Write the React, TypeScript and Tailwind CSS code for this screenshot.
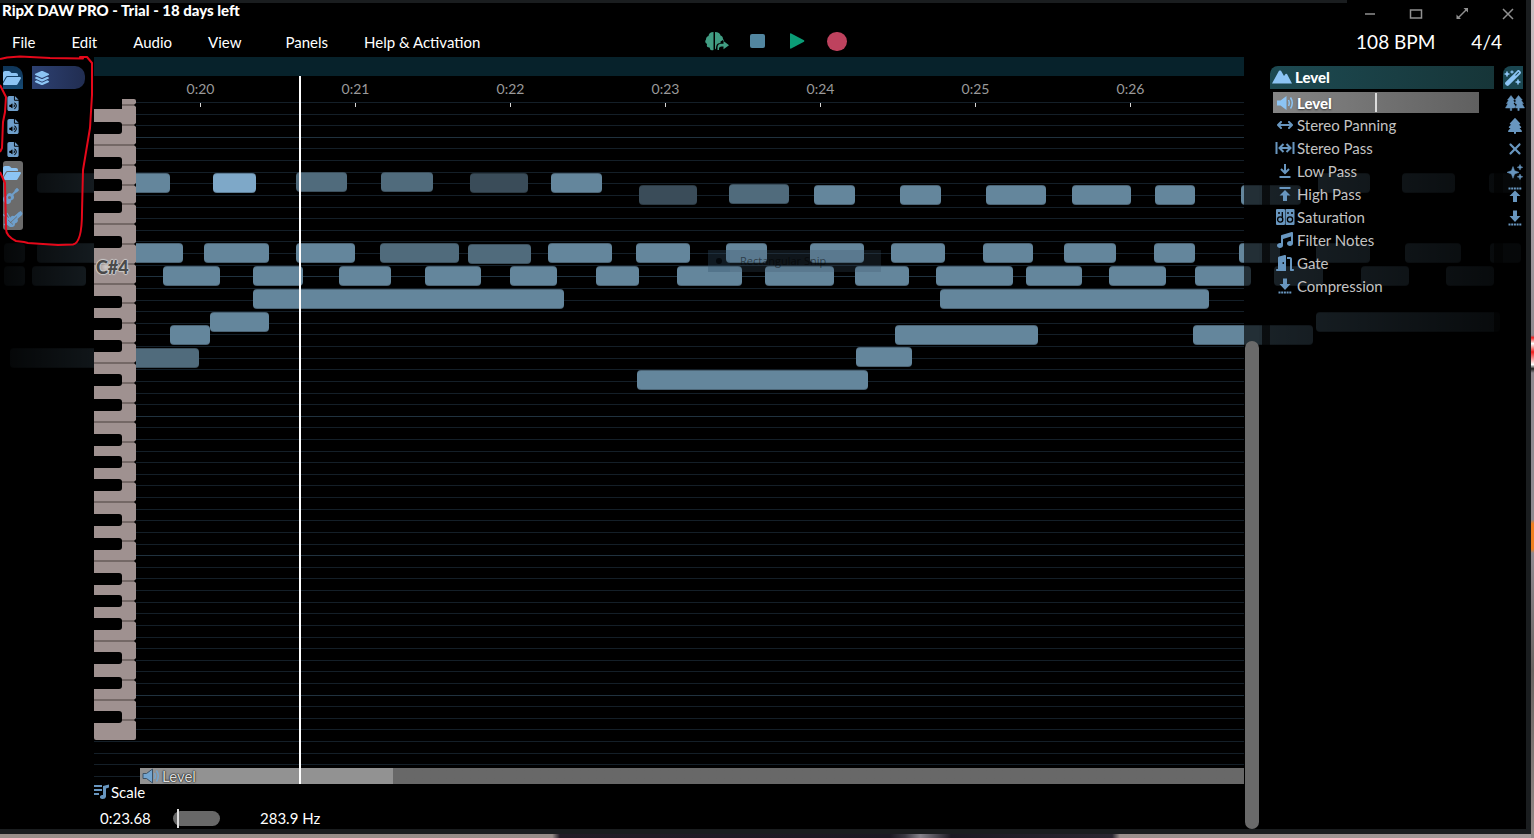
import type { ReactNode, SVGProps } from "react";
import {
  FaArrowsLeftRight,
  FaDoorOpen,
  FaFileAudio,
  FaFolderOpen,
  FaGuitar,
  FaLayerGroup,
  FaMusic,
  FaTree,
  FaWandMagicSparkles,
  FaXmark,
} from "react-icons/fa6";

type Tone = "base" | "bright" | "mid" | "dim";
type Note = [start: number, end: number, tone?: Tone];

const TONES: Record<Tone, string> = {
  base: "bg-[#64869c]",
  bright: "bg-[#7ea8c8]",
  mid: "bg-[#506b7c]",
  dim: "bg-[#3a4c59]",
};

// Each row is one pitch; notes are start / end offsets along the time axis
const NOTE_ROWS: { top: number; notes: Note[] }[] = [
  { top: 115, notes: [[296, 347, "mid"], [381, 433, "mid"]] },
  {
    top: 116,
    notes: [[37, 170], [213, 256, "bright"], [470, 528, "dim"], [551, 602], [1318, 1370], [1402, 1455], [1489, 1521]],
  },
  { top: 127, notes: [[729, 789, "mid"]] },
  {
    top: 128,
    notes: [[639, 697, "dim"], [814, 855], [900, 941], [986, 1046], [1072, 1131], [1155, 1195], [1241, 1301]],
  },
  {
    top: 186,
    notes: [
      [4, 25], [37, 183], [204, 269], [296, 355], [380, 459, "mid"], [548, 612], [636, 690], [726, 767], [810, 864],
      [891, 945], [983, 1033], [1064, 1116], [1154, 1195], [1239, 1280], [1316, 1370], [1405, 1461], [1490, 1521],
    ],
  },
  { top: 187, notes: [[468, 531, "mid"]] },
  {
    top: 209,
    notes: [
      [4, 25], [32, 86], [163, 220], [253, 303], [339, 391], [425, 481], [510, 557], [596, 639], [677, 742],
      [765, 834], [855, 909], [936, 1013], [1026, 1082], [1109, 1166], [1195, 1251], [1274, 1323], [1361, 1409],
      [1446, 1494],
    ],
  },
  { top: 232, notes: [[253, 564], [940, 1209]] },
  { top: 255, notes: [[210, 269], [1316, 1500]] },
  { top: 268, notes: [[170, 210], [895, 1038], [1193, 1313]] },
  { top: 290, notes: [[856, 912]] },
  { top: 291, notes: [[10, 199, "mid"]] },
  { top: 313, notes: [[637, 868]] },
];

const BLACK_KEYS = [
  23, 58, 80, 102, 137, 197, 219, 241, 275, 300, 335, 357, 380, 415, 439, 474, 496, 519, 553, 578, 612,
];
const KEY_EDGES = [
  6, 26, 46, 66, 86, 105, 125, 145, 165, 185, 204, 224, 244, 264, 284, 304, 323, 343, 363, 383, 403, 423, 442, 462,
  482, 502, 522, 542, 561, 581, 601, 621,
];

const TIMES = ["0:20", "0:21", "0:22", "0:23", "0:24", "0:25", "0:26"];

function Icon({ children, ...props }: SVGProps<SVGSVGElement>) {
  return (
    <svg viewBox="0 0 16 16" fill="currentColor" className="h-4 w-4" aria-hidden="true" {...props}>
      {children}
    </svg>
  );
}

const Mountains = () => (
  <Icon viewBox="0 0 20 14" className="h-[14px] w-5">
    <path d="M0 13.5 7 .8Q8 0 9 .8l3 5.2 1.5-2Q14 3.400 15 4l5 9.500Z" />
  </Icon>
);

const Volume = ({ outline }: { outline?: string }) => (
  <Icon viewBox="0 0 18 16" className="h-4 w-[18px]">
    <path d="M1 5.500h3.500L10.500 1v14L4.500 10.500H1z" stroke={outline} />
    <path d="M12.500 5q1.500 3 0 6M14.500 2.500q3.500 5.500 0 11" fill="none" stroke="currentColor" strokeWidth="1.500" />
  </Icon>
);

const StereoPassIcon = () => (
  <Icon viewBox="0 0 20 14" className="h-[14px] w-5">
    <path d="M1.500 1v12M18.500 1v12M4.500 7h11M8.500 3 4.500 7l4 4M11.500 3l4 4-4 4" fill="none" stroke="currentColor" strokeWidth="2" />
  </Icon>
);

const LowPassIcon = () => (
  <Icon>
    <path d="M8 1v9M4 6l4 4 4-4M2.500 14h11" fill="none" stroke="currentColor" strokeWidth="2" />
  </Icon>
);

const HighPassIcon = () => (
  <Icon>
    <path d="M2.500 1h11v2h-11zM8 4l5.500 5.500H10V15H6V9.500H2.500z" />
  </Icon>
);

const UpToDots = () => (
  <Icon>
    <path d="M8 3.500 13.500 9H10v6H6V9H2.500z" />
    <path d="M1.500 1.500h13" stroke="currentColor" strokeWidth="2" strokeDasharray="2 .7" />
  </Icon>
);

const DownToDots = () => (
  <Icon>
    <path d="M6 .5h4V6h3.500L8 12 2.500 6H6z" />
    <path d="M1.500 14.500h13" stroke="currentColor" strokeWidth="2" strokeDasharray="2 .7" />
  </Icon>
);

const Speakers = () => (
  <Icon viewBox="0 0 20 16" className="h-4 w-5">
    <rect x="1" y="0" width="9" height="16" rx="1" />
    <rect x="10.500" y="0" width="9" height="16" rx="1" />
    <g fill="none" stroke="#000" strokeWidth="1.300">
      <circle cx="5.200" cy="10.500" r="2.600" />
      <circle cx="15" cy="10.500" r="2.600" />
      <path d="M7.300 3v5M3 4h2M13 3v2M16 4h2" />
    </g>
  </Icon>
);

const TwoTrees = () => (
  <Icon viewBox="0 0 20 16" className="h-4 w-5">
    <path d="M6 .5 2.500 5h1.300L1.500 8.500H3L.5 13h4.800v2.500h1.400V13h2.800l1.200-1.500L8.500 8.500l1-1L8 5h1.500zM13.500.5 10 5l1.200.5L10 8l2 1.500L10.500 13h2.300v2.500h1.400V13h5.300L17 8.500h1.500L16 5h1.300z" stroke="currentColor" strokeWidth=".5" />
  </Icon>
);

const Sparkles = () => (
  <Icon>
    <path d="m6 2.500 1.600 4.200L12 8.300 7.600 10 6 14.300 4.400 10 0 8.300l4.400-1.600zM13 .5l.8 2 2 .8-2 .8-.8 2-.8-2-2-.8 2-.8zM13 10l.8 2 2 .8-2 .8-.8 2-.8-2-2-.8 2-.8z" stroke="currentColor" strokeWidth=".5" />
  </Icon>
);

const Violin = () => (
  <Icon viewBox="0 0 20 16" className="h-4 w-5">
    <path d="M2 8.500Q4 6 6.500 7.500L8 5.500q2-1.500 3.500 0L16 1l2-.5L19.500 2 19 4l-4.500 4q1 2-.5 3.500l-2 1q0 3-2.500 3.500-3 .5-4.500-1.500Q1.500 12.500 2 8.500Z" />
    <path d="M1 14 18 .5M0 3.500 10 11M4 2l5 9" stroke="currentColor" strokeWidth="1.200" />
    <path d="m5 9 5 4.500M7 12l7-6.500" stroke="#6b6b6b" strokeWidth=".8" />
  </Icon>
);

const ScaleIcon = () => (
  <Icon>
    <path d="M0 1h8v2H0zM0 5h8v2H0zM0 9h5v2H0zM9 2l6-1.500V3.500l-3 1v8Q11.500 15 8.500 15q-3-.5-2.500-2.500.5-2 3-1.500z" />
  </Icon>
);

const BrainExport = () => (
  <Icon viewBox="0 0 26 20" className="h-5 w-[26px]">
    <path d="M9.500 1v18Q6 20 5.500 16.500 2 16.500 3 13 0 11 2 8.500 2 5.500 4.500 5 5 1 9.500 1ZM11 1q5 0 5.500 3.500 2.500.5 2.500 3.500l1 1.500-1 .5v-1l-2.500 1.500v1.700H15q-3 .5-3 5.300l-1 1z" />
    <path d="M13.500 19v-3q.3-3.300 4-3.300h2V10l5.500 4.300-5.500 4V15.500h-2Q15 15.500 15 17.500V19z" />
  </Icon>
);

const EFFECTS: { name: string; icon: ReactNode }[] = [
  { name: "Stereo Panning", icon: <FaArrowsLeftRight className="h-4 w-4" /> },
  { name: "Stereo Pass", icon: <StereoPassIcon /> },
  { name: "Low Pass", icon: <LowPassIcon /> },
  { name: "High Pass", icon: <HighPassIcon /> },
  { name: "Saturation", icon: <Speakers /> },
  { name: "Filter Notes", icon: <FaMusic className="h-4 w-4" /> },
  { name: "Gate", icon: <FaDoorOpen className="h-[18px] w-[18px]" /> },
  { name: "Compression", icon: <DownToDots /> },
];

const TOOLS: { name: string; icon: ReactNode }[] = [
  { name: "Forest", icon: <TwoTrees /> },
  { name: "Tree", icon: <FaTree className="h-4 w-4" /> },
  { name: "Remove", icon: <FaXmark className="h-[18px] w-[18px]" /> },
  { name: "Enhance", icon: <Sparkles /> },
  { name: "Raise", icon: <UpToDots /> },
  { name: "Lower", icon: <DownToDots /> },
];

function Header() {
  return (
    <header className="h-[54px] shrink-0">
      <div className="flex h-5 items-start justify-between">
        <h1 className="pl-[2px] text-[15px] leading-[14px] font-black">RipX DAW PRO - Trial - 18 days left</h1>
        <div className="flex gap-[26px] pt-[1px] pr-2 text-[#909090]">
          <button aria-label="Minimise">
            <Icon className="h-5 w-5" viewBox="0 0 20 20">
              <path d="M5 10h10" stroke="currentColor" strokeWidth="1.500" />
            </Icon>
          </button>
          <button aria-label="Maximise">
            <Icon className="h-5 w-5" viewBox="0 0 20 20">
              <path d="M4.500 6h11v8h-11z" fill="none" stroke="currentColor" strokeWidth="1.500" />
            </Icon>
          </button>
          <button aria-label="Full screen">
            <Icon className="h-5 w-5" viewBox="0 0 20 20">
              <path d="m6 14 9-9" stroke="currentColor" strokeWidth="1.500" />
              <path d="M11.500 4H16v4.500zM4.500 10.500V15H9z" />
            </Icon>
          </button>
          <button aria-label="Close">
            <Icon className="h-5 w-5" viewBox="0 0 20 20">
              <path d="m5 5 10 10M15 5 5 15" stroke="currentColor" strokeWidth="1.500" />
            </Icon>
          </button>
        </div>
      </div>
      <div className="grid h-[34px] grid-cols-[1fr_auto_1fr] items-center pt-1">
        <nav className="flex gap-9 pl-3 text-[15px] leading-5">
          <button>File</button>
          <button>Edit</button>
          <button>Audio</button>
          <button className="mr-2">View</button>
          <button>Panels</button>
          <button>Help &amp; Activation</button>
        </nav>
        <div className="flex pb-[2px] pl-7 *:flex *:w-10 *:items-center *:justify-center">
          <button aria-label="Rip" className="text-[#419d83]">
            <BrainExport />
          </button>
          <button aria-label="Stop">
            <span className="h-[14px] w-[15px] rounded-[2px] bg-[#5286a0]" />
          </button>
          <button aria-label="Play" className="text-[#0b9c76]">
            <Icon>
              <path d="M1 1q0-1 1.200-.6L15 7.300q.8.700 0 1.400L2.200 15.600Q1 16 1 15z" />
            </Icon>
          </button>
          <button aria-label="Record">
            <span className="h-[19px] w-5 rounded-full bg-[#be425e]" />
          </button>
        </div>
        <div className="flex justify-end gap-9 pr-6 text-[19px] leading-6">
          <span>108 BPM</span>
          <span>4/4</span>
        </div>
      </div>
    </header>
  );
}

function Keyboard() {
  return (
    <div className="relative w-[42px] shrink-0 pt-[23px]">
      <svg viewBox="0 0 42 641" className="block h-[641px] w-[42px]" aria-label="Piano keys">
        <rect width="42" height="641" rx="2" fill="#9f9190" />
        {KEY_EDGES.map((y) => (
          <g key={y}>
            <path d={`M0 ${y}h42`} stroke="#746866" strokeWidth="2" />
            <path d={`M40 ${y}l2-2v4z`} />
          </g>
        ))}
        <path d="M0 0h28v10H0z" />
        {BLACK_KEYS.map((y) => (
          <rect key={y} x="-3" y={y} width="31" height="12" rx="3" />
        ))}
      </svg>
      <span className="absolute top-[179px] left-[2px] bg-[radial-gradient(circle_at_30%_50%,#d0cccb_0,#d0cccb00_30%)] text-[18px] leading-6 font-black text-[#4a4a4a] [text-shadow:1px_0_1px_#ccc,-1px_0_1px_#ccc,0_1px_1px_#ccc,0_-1px_1px_#ccc]">
        C#4
      </span>
    </div>
  );
}

// Pitch grid and notes run under every panel of the workspace
function NoteCanvas() {
  return (
    <div className="absolute inset-0 overflow-hidden">
      <div className="absolute top-0 right-[282px] bottom-[45px] left-[94px]">
        <svg width="100%" height="100%">
          {Array.from({ length: 59 }, (_, i) => (
            <rect
              key={i}
              y={Math.round(45 + i * 11.62)}
              width="100%"
              height="1"
              fill={i % 12 === 3 ? "#20323f" : "#141f28"}
            />
          ))}
        </svg>
      </div>
      {NOTE_ROWS.map((row) =>
        row.notes.map(([start, end, tone = "base"]) => (
          <div
            key={`${row.top}-${start}`}
            className={`absolute h-5 rounded-[4px] border-y border-black/25 ${TONES[tone]}`}
            style={{ top: row.top, left: start, width: end - start }}
          />
        )),
      )}
      <div className="absolute top-[193px] left-[708px] flex h-[22px] w-[173px] items-center bg-[#3a5468]/25 font-['Open_Sans',sans-serif] text-[11px] text-black/50">
        <span className="flex h-full w-[22px] items-center justify-center bg-[#1c4a70]/10">
          <span className="h-[6px] w-[6px] rounded-full bg-[#04080c]" />
        </span>
        <span className="pl-[10px]">Rectangular Snip</span>
      </div>
    </div>
  );
}

function LayersPanel() {
  return (
    <aside className="relative flex w-[94px] shrink-0 gap-[9px] bg-linear-to-r from-black/95 to-black/80 pt-[9px] pl-[3px] text-[#6f9fcb]">
      <div className="w-5">
        <button
          aria-label="Open"
          className="flex h-[23px] w-5 items-center overflow-hidden rounded-tr-[10px] bg-linear-to-b from-[#0f3558] to-[#164a74] text-[#8cc4f4]"
        >
          <FaFolderOpen className="h-4 w-[18px] shrink-0" />
        </button>
        <div className="flex flex-col pt-[3px] *:flex *:h-[23px] *:items-center *:justify-center">
          <button aria-label="Audio file 1"><FaFileAudio className="h-[15px] w-3" /></button>
          <button aria-label="Audio file 2"><FaFileAudio className="h-[15px] w-3" /></button>
          <button aria-label="Audio file 3"><FaFileAudio className="h-[15px] w-3" /></button>
        </div>
        <div className="flex flex-col overflow-hidden rounded-[3px] bg-[#6b6b6b] *:flex *:h-[23px] *:items-center">
          <button aria-label="Folder" className="text-[#8cc4f4]"><FaFolderOpen className="h-4 w-[18px]" /></button>
          <button aria-label="Guitar"><FaGuitar className="h-4 w-4" /></button>
          <button aria-label="Strings"><Violin /></button>
        </div>
      </div>
      <button
        aria-label="Layers"
        className="flex h-[23px] w-[53px] items-center rounded-r-[10px] bg-linear-to-r from-[#2d4172] to-[#212d51] text-[#8cc4f4]"
      >
        <FaLayerGroup className="ml-[2px] h-4 w-4" />
      </button>
    </aside>
  );
}

function EffectsPanel() {
  return (
    <aside className="relative flex w-[267px] shrink-0 gap-[9px] bg-[linear-gradient(90deg,#000000aa_3px,#000000e6_3px,#000000e6_11px,#000000c0_11px,#000000ea_235px,#000000f8_235px,#000000f8_244px,#000000f0_244px)] pt-[9px] pr-[3px] pl-[11px]">
      <div className="min-w-0 flex-1 text-[15px] leading-5">
        <h2 className="flex h-[23px] items-center gap-[3px] rounded-tl-[8px] bg-linear-to-r from-[#1d4a52] to-[#163538] pb-px pl-[2px] font-black">
          <span className="text-[#8cc4f4]"><Mountains /></span>
          Level
        </h2>
        <div className="mt-[3px] mr-[15px] ml-[3px] grid h-[21px]">
          <input
            id="level"
            type="range"
            defaultValue={50}
            className="col-start-1 row-start-1 h-[21px] w-full appearance-none bg-linear-to-r from-[#858585] to-[#606060] [&::-webkit-slider-thumb]:h-[19px] [&::-webkit-slider-thumb]:w-[2px] [&::-webkit-slider-thumb]:appearance-none [&::-webkit-slider-thumb]:bg-[#dcdcdc]"
          />
          <label htmlFor="level" className="pointer-events-none col-start-1 row-start-1 flex items-center font-black [text-shadow:0_1px_2px_#333]">
            <span className="flex w-6 justify-center text-[#8cc4f4]">
              <Volume />
            </span>
            Level
          </label>
        </div>
        {EFFECTS.map((effect) => (
          <button key={effect.name} className="ml-[3px] flex h-[23px] items-center text-[#c3c3c3]">
            <span className="flex w-6 justify-center text-[#6896bf]">{effect.icon}</span>
            {effect.name}
          </button>
        ))}
      </div>
      <div className="w-5 text-[#6896bf]">
        <button
          aria-label="Effects"
          className="mb-[2px] flex h-[23px] w-5 items-center justify-center rounded-tl-[8px] bg-[#1a4650] text-[#8cc4f4]"
        >
          <FaWandMagicSparkles className="h-4 w-[18px]" />
        </button>
        {TOOLS.map((tool) => (
          <button key={tool.name} aria-label={tool.name} className="flex h-[23px] w-[23px] items-center justify-center">
            {tool.icon}
          </button>
        ))}
      </div>
    </aside>
  );
}

function Roll() {
  return (
    <section className="relative flex min-w-0 flex-1 flex-col overflow-hidden">
      <div className="h-[19px] shrink-0 bg-[#07222b]" />
      <div className="flex min-h-0 flex-1">
        <Keyboard />
        <div className="relative flex min-w-0 flex-1 flex-col overflow-hidden">
          <div className="-ml-[13px] flex">
            {TIMES.map((time) => (
              <div key={time} className="flex w-[155px] shrink-0 flex-col items-center text-[14px] leading-[26px] text-[#9a9a9a]">
                {time}
                <span className="mt-[1px] h-1 w-px bg-[#d8d8d8]" />
              </div>
            ))}
          </div>
          <div className="mt-auto ml-1 flex h-4 shrink-0 items-center gap-[2px] bg-linear-to-r from-[#929292] from-[253px] to-[#686868] to-[253px] pl-[2px] text-[15px] leading-4 text-[#dedede] [text-shadow:0_0_2px_#000,0_0_1px_#000]">
            <span className="text-[#73a5d0]"><Volume outline="#3c5266" /></span>
            Level
          </div>
          <div className="absolute inset-y-0 left-[163px] w-[2px] bg-white" />
        </div>
      </div>
      <footer className="h-[45px] shrink-0 bg-black text-[15px] leading-5">
        <button className="flex h-4 items-center gap-px">
          <span className="text-[#6896bf]"><ScaleIcon /></span>
          Scale
        </button>
        <div className="flex h-9 items-center pl-[6px]">
          <span className="w-[73px]">0:23.68</span>
          <input
            type="range"
            aria-label="Zoom"
            defaultValue={8}
            className="mr-10 h-[15px] w-[47px] appearance-none rounded-full bg-[#686868] [&::-webkit-slider-thumb]:h-[19px] [&::-webkit-slider-thumb]:w-[2px] [&::-webkit-slider-thumb]:appearance-none [&::-webkit-slider-thumb]:bg-[#dcdcdc]"
          />
          <span>283.9 Hz</span>
        </div>
      </footer>
    </section>
  );
}

export default function App() {
  return (
    <div className="relative h-screen min-h-[838px] bg-[linear-gradient(90deg,#9a8f8a_0%,#978c88_36%,#221c26_36.500%,#1b1822_58%,#3a3842_59%,#85818a_60%,#1b1822_62%,#2a2630_72.500%,#9b8f8c_73%,#a49a9a_100%)] pr-[3px] pb-1 font-['Lato',sans-serif] text-white">
      {/* Sliver of desktop beside the window */}
      <div className="absolute inset-y-0 right-0 w-[3px] bg-[linear-gradient(180deg,#cbbfc2_0%,#8f8a90_40%,#f02020_40.300%,#fff_41%,#f02020_42%,#fff_43.500%,#222_44%,#8f8a90_44.500%,#8f8a90_62%,#f08020_62.500%,#f08020_65.500%,#8f8a90_66%,#6a6462_80%,#938a88_100%)]" />
      <div className="relative flex h-full flex-col border-r-[5px] border-b-[5px] border-[#1a1d1f] bg-black">
        <div className="mr-[179px] h-[3px] shrink-0 bg-[#1a1d1f]" />
        <Header />
        <main className="relative flex min-h-0 flex-1">
          <NoteCanvas />
          <LayersPanel />
          <Roll />
          <div className="relative flex w-[15px] shrink-0 flex-col bg-black/65 pl-px">
            <div className="mt-[284px] flex-1 rounded-full bg-[#6a6a6a]" />
          </div>
          <EffectsPanel />
        </main>
        {/* Freehand loop round the layers panel */}
        <svg className="pointer-events-none absolute top-0 left-0 h-[250px] w-[100px]" viewBox="0 0 100 250">
          <path
            d="M0 59 7 57.500 20 56.500 50 58 83 58.500 80 57 87 57 92 63 92 95 90 128 86 152 83 170 82 212Q82 243 73 244.500L58 245 28 243 24 242 16 241Q6 236 6 229L5 183 0 172M0 85 6 97 5 112 3 122 2 148 0 152"
            fill="none"
            stroke="#e5081a"
            strokeWidth="2"
            strokeLinejoin="round"
          />
        </svg>
      </div>
    </div>
  );
}
